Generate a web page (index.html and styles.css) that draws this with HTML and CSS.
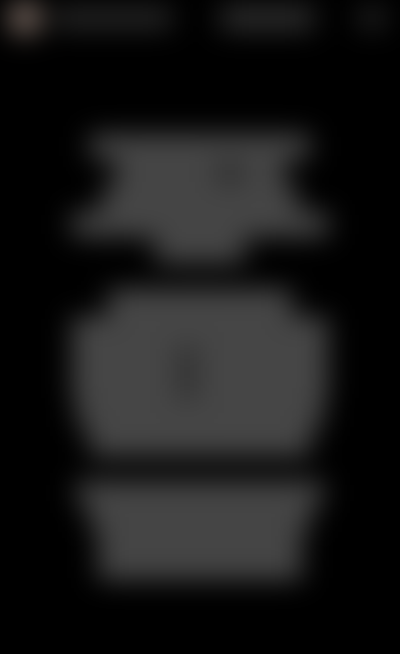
FILE: index.html
```html
<!DOCTYPE html>
<html lang="en">
<head>
<meta charset="utf-8">
<title>Blurred lyrics</title>
<link rel="stylesheet" href="styles.css">
</head>
<body>
<div class="page">
  <header class="top">
    <div class="avatar"></div>
    <div class="name"></div>
    <div class="pill"></div>
    <div class="icon"></div>
  </header>
  <main class="lyrics">
    <section class="stanza s1">
      <div class="line w214"></div>
      <div class="line w160 split"><span class="seg a1"></span><span class="seg a2"></span></div>
      <div class="line w190"></div>
      <div class="line w250"></div>
      <div class="line w90"></div>
    </section>
    <section class="stanza s2">
      <div class="line w180"></div>
      <div class="line w250"></div>
      <div class="line w250 split"><span class="seg b1"></span><span class="seg b2"></span></div>
      <div class="line w250 split"><span class="seg b1"></span><span class="seg b2"></span></div>
      <div class="line w240"></div>
      <div class="line w216"></div>
    </section>
    <section class="stanza s3">
      <div class="line w240"></div>
      <div class="line w216"></div>
      <div class="line w200"></div>
      <div class="line w200"></div>
    </section>
  </main>
</div>
</body>
</html>
```
FILE: styles.css
```css
html, body {
  margin: 0;
  height: 100%;
  background: #000;
  overflow: hidden;
}
.page {
  width: 400px;
  height: 654px;
  background: #000;
  filter: blur(14px);
}
.top {
  display: flex;
  align-items: center;
  height: 36px;
  padding-left: 8px;
}
.avatar {
  width: 34px;
  height: 34px;
  border-radius: 50%;
  background: #7a6a62;
  flex: none;
}
.name {
  width: 118px;
  height: 20px;
  margin-left: 12px;
  background: #2c2c2c;
}
.pill {
  width: 94px;
  height: 24px;
  margin-left: 48px;
  background: #303030;
}
.icon {
  width: 28px;
  height: 20px;
  margin-left: 44px;
  background: #262626;
}
.lyrics {
  display: flex;
  flex-direction: column;
  align-items: center;
}
.stanza {
  display: flex;
  flex-direction: column;
  align-items: center;
  gap: 3px;
}
.s1 { margin-top: 99px; }
.s2 { margin-top: 28px; }
.s3 { margin-top: 27px; }
.s1 .line { height: 23px; }
.s2 .line { height: 25px; }
.s3 .line { height: 22px; }
.line {
  background: #4e4e4e;
}
.split {
  display: flex;
  justify-content: space-between;
  background: #383838;
}
.seg {
  display: block;
  background: #4e4e4e;
}
.a1 { width: 100px; }
.a2 { width: 40px; }
.b1 { width: 104px; }
.b2 { width: 130px; }
.w90 { width: 90px; }
.w160 { width: 170px; }
.w180 { width: 184px; }
.w190 { width: 196px; }
.w200 { width: 204px; }
.w214 { width: 220px; }
.w216 { width: 222px; }
.w240 { width: 246px; }
.w250 { width: 256px; }
```
